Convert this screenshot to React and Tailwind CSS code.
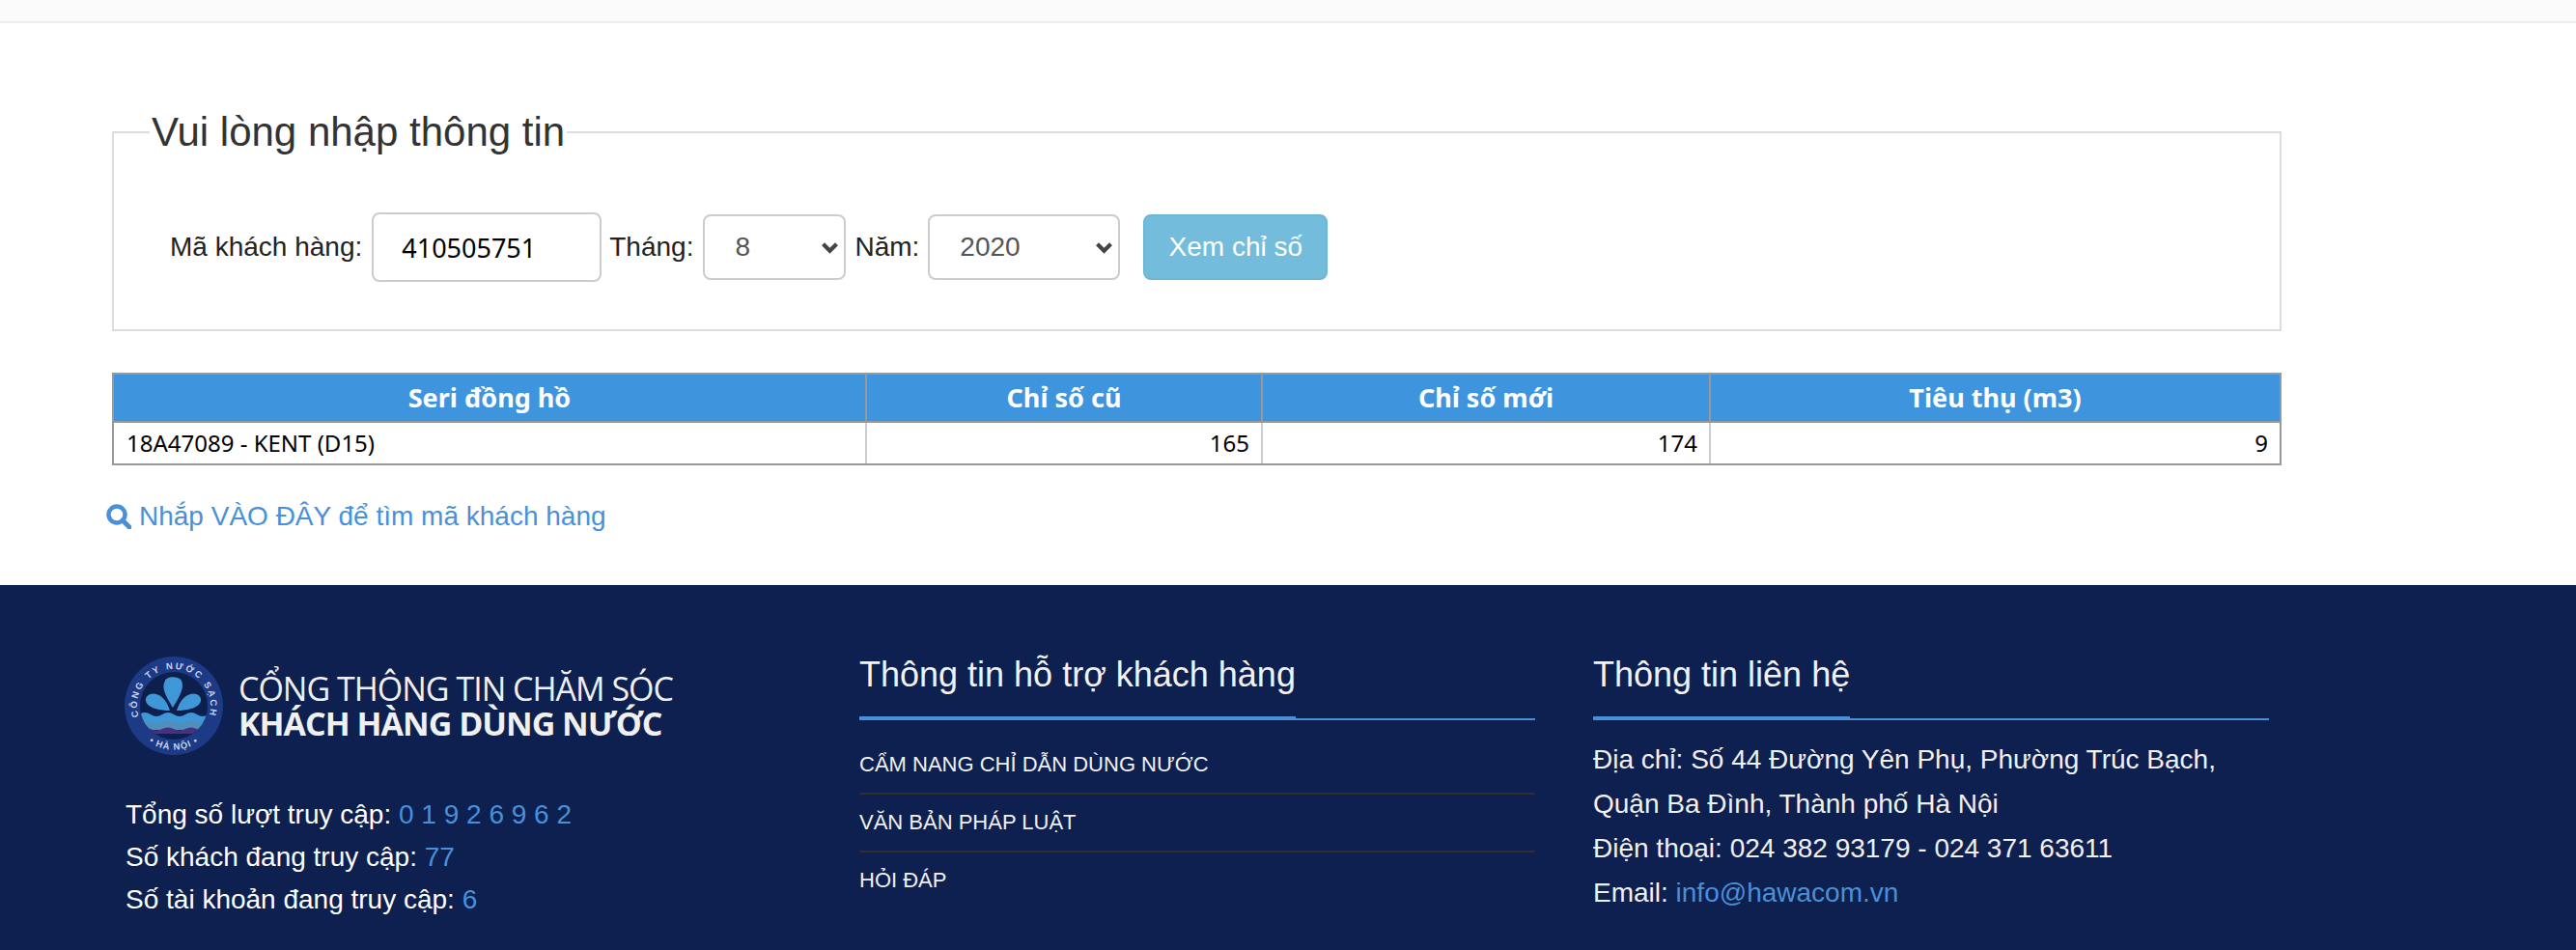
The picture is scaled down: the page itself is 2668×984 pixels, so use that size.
import React from "react";

const columns = [
  { title: "Seri đồng hồ", width: "w-[780px]" },
  { title: "Chỉ số cũ", width: "w-[410px]" },
  { title: "Chỉ số mới", width: "w-[464px]" },
  { title: "Tiêu thụ (m3)", width: "" },
];

const links = ["CẨM NANG CHỈ DẪN DÙNG NƯỚC", "VĂN BẢN PHÁP LUẬT", "HỎI ĐÁP"];

const Chevron = () => (
  <svg viewBox="0 0 20 14" className="absolute right-[7px] top-[28px] h-[13px] w-[19px] pointer-events-none">
    <path d="M2.5 3l7.5 7.5L17.5 3" fill="none" stroke="#444" strokeWidth="4.5" />
  </svg>
);

const Select = ({ value, width }) => (
  <div className={`relative ${width}`}>
    <select
      defaultValue={value}
      className="w-full h-[68px] appearance-none rounded-lg border-2 border-[#ccc] bg-white pl-[31px] text-[28px] text-[#555]"
    >
      <option>{value}</option>
    </select>
    <Chevron />
  </div>
);

const Logo = () => (
  <svg viewBox="0 0 102 102" className="w-[102px] h-[102px] shrink-0">
    <defs>
      <path id="ringTop" d="M18.7 71A38 38 0 1 1 83.3 71" />
      <path id="ringBottom" d="M12 75A46 46 0 0 0 90 75" />
      <clipPath id="inner">
        <circle cx="51" cy="51" r="35" />
      </clipPath>
    </defs>
    <circle cx="51" cy="51" r="51" fill="#1c3a86" />
    <circle cx="51" cy="51" r="35" fill="#0d1f4d" />
    <text fontSize="9.5" fontWeight="700" fill="#c9d4ea" fontFamily="'Liberation Sans', sans-serif" letterSpacing="2.2">
      <textPath href="#ringTop" startOffset="50%" textAnchor="middle">CÔNG TY NƯỚC SẠCH</textPath>
    </text>
    <text fontSize="9.5" fontWeight="700" fill="#c9d4ea" fontFamily="'Liberation Sans', sans-serif" letterSpacing="1">
      <textPath href="#ringBottom" startOffset="50%" textAnchor="middle">•   HÀ NỘI   •</textPath>
    </text>
    <g clipPath="url(#inner)">
      <path d="M50 53C42 40 38 32 42 25c2-5 14-5 17 0 3 7-1 15-9 28z" fill="#3f97d8" />
      <path d="M47 56C38 56 24 54 22 46c-1-5 5-9 11-7 7 2 11 8 14 17z" fill="#3f97d8" />
      <path d="M54 56c9 0 23-2 25-10 1-5-5-9-11-7-7 2-11 8-14 17z" fill="#3f97d8" />
      <path d="M15 60q6-4 12 0t12 0 12 0 12 0 12 0 12 0v10H15z" fill="#3f97d8" />
      <path d="M15 68q6-3 12 0t12 0 12 0 12 0 12 0 12 0v8H15z" fill="#4f8fb8" />
      <path d="M15 75q6-3 12 0t12 0 12 0 12 0 12 0 12 0v5H15z" fill="#46307f" />
    </g>
  </svg>
);

const Heading = ({ children }) => (
  <div className="relative border-b-2 border-[#4a90d9] pb-[22px]">
    <h3 className="w-fit text-[36px] leading-[46px] text-[#f2f2f2] relative">
      {children}
      <span className="absolute left-0 right-0 -bottom-[24px] h-1 bg-[#4a90d9]" />
    </h3>
  </div>
);

export default function App() {
  return (
    <div className="w-[2668px] h-[984px] overflow-hidden bg-white font-['Liberation_Sans',sans-serif] text-[28px] text-[#333]">
      <div className="h-6 bg-[#fbfbfb] border-b-2 border-[#eeeeee]" />

      <main className="h-[582px] pl-[116px] pt-[83px]">
        <fieldset className="w-[2247px] h-[236px] border-2 border-[#ddd] px-[38px]">
          <legend className="-ml-px px-[2px] text-[42px] leading-[60px] text-[#333]">Vui lòng nhập thông tin</legend>
          <div className="flex items-center h-[144px] mt-[17px] pl-[20px]">
            <label className="text-[#222]">Mã khách hàng:</label>
            <input
              readOnly
              value="410505751"
              className="ml-[10px] w-[238px] h-[72px] rounded-lg border-2 border-[#ccc] pl-[29px] text-[27px] text-black font-['Noto_Sans',sans-serif] outline-none"
            />
            <label className="ml-[8px] mr-[10px] text-[#222]">Tháng:</label>
            <Select value="8" width="w-[148px]" />
            <label className="ml-[9px] mr-[9px] text-[#222]">Năm:</label>
            <Select value="2020" width="w-[199px]" />
            <button className="ml-[24px] w-[191px] h-[68px] rounded-lg border-2 border-[#6cb6d8] bg-[#73bcdb] text-white">
              Xem chỉ số
            </button>
          </div>
        </fieldset>

        <table className="mt-[43px] w-[2247px] table-fixed border-collapse border-2 border-[#999] font-['Noto_Sans',sans-serif] text-[24px] text-black">
          <thead>
            <tr className="h-[50px] bg-[#3f95dd] text-white border-b-2 border-[#999]">
              {columns.map((col) => (
                <th key={col.title} className={`${col.width} border-2 border-[#999] text-[27px] font-bold p-0`}>{col.title}</th>
              ))}
            </tr>
          </thead>
          <tbody>
            <tr className="h-[44px]">
              <td className="border-2 border-[#ccc] border-b-[#999] border-l-[#999] px-[13px]">18A47089 - KENT (D15)</td>
              <td className="border-2 border-[#ccc] border-b-[#999] px-[12px] text-right">165</td>
              <td className="border-2 border-[#ccc] border-b-[#999] px-[12px] text-right">174</td>
              <td className="border-2 border-[#ccc] border-b-[#999] border-r-[#999] px-[12px] text-right">9</td>
            </tr>
          </tbody>
        </table>

        <a className="mt-[32px] -ml-[6px] flex items-center gap-[8px] text-[#4a90d9]">
          <svg viewBox="0 0 26 26" className="w-[26px] h-[26px]">
            <circle cx="11" cy="11" r="8.5" fill="none" stroke="#4a90d9" strokeWidth="4.5" />
            <path d="M17 17l7 7" stroke="#4a90d9" strokeWidth="5" strokeLinecap="round" />
          </svg>
          Nhắp VÀO ĐÂY để tìm mã khách hàng
        </a>
      </main>

      <footer className="h-[378px] bg-[#0d2050] pl-[100px] pt-[70px] grid grid-cols-[repeat(3,760px)] text-white">
        <div className="px-[30px]">
          <div className="flex items-center -ml-px gap-[16px] h-[110px]">
            <Logo />
            <div className="font-['Open_Sans',sans-serif] text-[#f0f0f0]">
              <div className="text-[34px] leading-[36px] tracking-[-1px]">CỔNG THÔNG TIN CHĂM SÓC</div>
              <div className="text-[34px] leading-[36px] font-bold tracking-[-1px]">KHÁCH HÀNG DÙNG NƯỚC</div>
            </div>
          </div>
          <div className="mt-[36px] leading-[44px]">
            <p>Tổng số lượt truy cập: <span className="text-[#4a90d9]">0 1 9 2 6 9 6 2</span></p>
            <p>Số khách đang truy cập: <span className="text-[#4a90d9]">77</span></p>
            <p>Số tài khoản đang truy cập: <span className="text-[#4a90d9]">6</span></p>
          </div>
        </div>

        <div className="px-[30px]">
          <Heading>Thông tin hỗ trợ khách hàng</Heading>
          <ul className="mt-[17px] text-[22px] text-[#f0f0f0]">
            {links.map((link, i) => (
              <li key={link} className={`h-[60px] leading-[58px] ${i < 2 ? "border-b-2 border-[#2f2f2f]" : ""}`}>{link}</li>
            ))}
          </ul>
        </div>

        <div className="px-[30px]">
          <Heading>Thông tin liên hệ</Heading>
          <div className="mt-[18px] leading-[46px] text-[#f0f0f0]">
            <p>Địa chỉ: Số 44 Đường Yên Phụ, Phường Trúc Bạch,</p>
            <p>Quận Ba Đình, Thành phố Hà Nội</p>
            <p>Điện thoại: 024 382 93179 - 024 371 63611</p>
            <p>Email: <a className="text-[#4a90d9]">info@hawacom.vn</a></p>
          </div>
        </div>
      </footer>
    </div>
  );
}
